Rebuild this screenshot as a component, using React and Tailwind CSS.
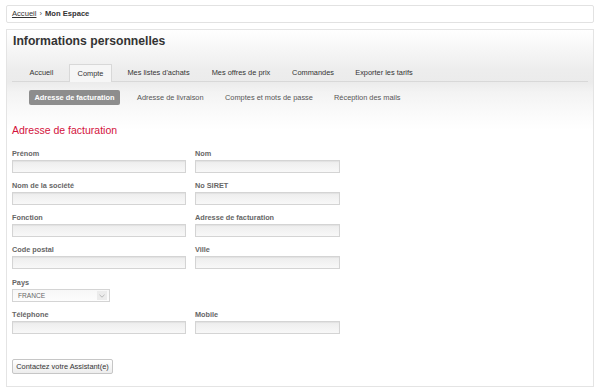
import React from "react";

const Field = ({ label, w }) => (
  <div className={`flex flex-col ${w}`}>
    <div className="h-[10px] leading-[10px] text-[7.3px] font-bold text-[#666]">{label}</div>
    <div className="mt-[1px] h-[13px] border border-[#d4d4d4] bg-[linear-gradient(to_bottom,#ededed,#f8f8f8)] shadow-[inset_0_1px_1px_rgba(0,0,0,0.05)]" />
  </div>
);

const Row = ({ a, b, first }) => (
  <div className={`flex gap-[9px] ${first ? "" : "mt-[8px]"}`}>
    <Field label={a} w="w-[174px]" />
    {b ? <Field label={b} w="w-[145px]" /> : null}
  </div>
);

export default function App() {
  const tabs = [
    { t: "Accueil", c: "w-[39px]" },
    { t: "Compte", c: "w-[43px] ml-[8px]", active: true },
    { t: "Mes listes d'achats", c: "w-[77px] ml-[8px]" },
    { t: "Mes offres de prix", c: "w-[74px] ml-[7px]" },
    { t: "Commandes", c: "w-[58px] ml-[6px]" },
    { t: "Exporter les tarifs", c: "w-[74px] ml-[5px]" },
  ];
  return (
    <div className="w-[600px] h-[389px] bg-white px-[6px] pt-[5px] font-['Liberation_Sans',Arial,sans-serif] text-[#333] overflow-hidden">
      <div className="h-[18px] border border-[#e2e2e2] rounded-[2px] flex items-center pl-[5px] text-[7.6px]">
        <span className="underline text-[#333]">Accueil</span>
        <span className="mx-[3px] text-[#555]">›</span>
        <span className="font-bold">Mon Espace</span>
      </div>
      <div className="mt-[6px] h-[358px] border border-[#e4e4e4] bg-[linear-gradient(to_bottom,#ffffff_0px,#f7f7f7_18px,#ededed_40px,#ebebeb_52px,#f3f3f3_62px,#fbfbfb_85px,#ffffff_100px,#ffffff_100%)]">
        <div className="h-[22px] pl-[6px] flex items-center text-[12.2px] font-bold text-[#333]">Informations personnelles</div>
        <div className="mt-[12px] mx-[5px] h-[18px] border-b border-[#d8d8d8] flex items-end pl-[10px]">
          {tabs.map(({ t, c, active }) =>
            active ? (
              <div key={t} className={`${c} h-[18px] -mb-[1px] flex items-center justify-center border border-b-0 border-[#d8d8d8] bg-[#f6f6f6] text-[7.4px] text-[#333] rounded-t-[1px] whitespace-nowrap`}>
                {t}
              </div>
            ) : (
              <div key={t} className={`${c} h-[17px] flex items-center justify-center text-[7.4px] text-[#333] whitespace-nowrap`}>{t}</div>
            )
          )}
        </div>
        <div className="mt-[8px] ml-[22px] h-[15px] flex items-center">
          <div className="w-[91px] h-[15px] flex items-center justify-center bg-[#8d8d8d] rounded-[2px] text-white font-bold text-[7.4px] whitespace-nowrap">Adresse de facturation</div>
          <div className="ml-[17px] w-[88px] text-[#555] text-[7.4px] whitespace-nowrap">Adresse de livraison</div>
          <div className="w-[109px] text-[#555] text-[7.4px] whitespace-nowrap">Comptes et mots de passe</div>
          <div className="text-[#555] text-[7.4px] whitespace-nowrap">Réception des mails</div>
        </div>
        <div className="px-[5px]">
          <div className="mt-[18px] h-[14px] leading-[14px] text-[10.5px] text-[#d3123c]">Adresse de facturation</div>
          <div className="mt-[12px]">
            <Row first a="Prénom" b="Nom" />
            <Row a="Nom de la société" b="No SIRET" />
            <Row a="Fonction" b="Adresse de facturation" />
            <Row a="Code postal" b="Ville" />
            <div className="mt-[9px] flex flex-col">
              <div className="h-[10px] leading-[10px] text-[7.3px] font-bold text-[#666]">Pays</div>
              <div className="mt-[1px] w-[98px] h-[13px] border border-[#d4d4d4] bg-[linear-gradient(to_bottom,#f7f7f7,#fdfdfd)] flex items-center justify-between pl-[5px] pr-[2px]">
                <span className="text-[6.6px] text-[#666]">FRANCE</span>
                <div className="w-[10px] h-[9px] bg-[#ececec] flex items-center justify-center">
                  <svg width="6" height="4" viewBox="0 0 6 4"><path d="M0.5 0.8 L3 3.2 L5.5 0.8" fill="none" stroke="#aaa" strokeWidth="0.8" /></svg>
                </div>
              </div>
            </div>
            <Row a="Téléphone" b="Mobile" />
          </div>
          <div className="mt-[25px] w-[101px] h-[15px] border border-[#c6c6c6] rounded-[2px] bg-[linear-gradient(to_bottom,#ffffff,#ededed)] flex items-center justify-center text-[7.4px] text-[#333]">
            Contactez votre Assistant(e)
          </div>
        </div>
      </div>
    </div>
  );
}
